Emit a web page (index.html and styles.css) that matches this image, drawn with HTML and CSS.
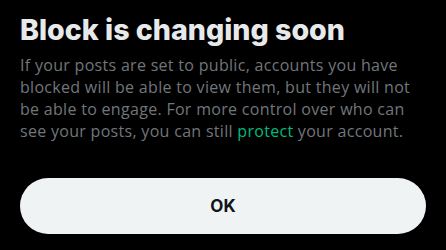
FILE: index.html
```html
<!DOCTYPE html>
<html>
<head>
<meta charset="utf-8">
<link rel="stylesheet" href="styles.css">
</head>
<body>
<div class="dialog">
  <h1 class="title">Block is changing soon</h1>
  <p class="body">If your posts are set to public, accounts you have blocked will be able to view them, but they will not be able to engage. For more control over who can see your posts, you can still <a class="link" href="#">protect</a> your account.</p>
  <button class="ok">OK</button>
</div>
</body>
</html>
```
FILE: styles.css
```css
html, body {
  margin: 0;
  padding: 0;
  background: #000;
}
.dialog {
  width: 446px;
  height: 250px;
  box-sizing: border-box;
  padding: 10px 20px 0 20px;
  display: flex;
  flex-direction: column;
  font-family: "Open Sans", "Noto Sans", sans-serif;
}
.title {
  margin: 0;
  font-family: "Inter", sans-serif;
  font-size: 28.6px;
  line-height: 40px;
  font-weight: 800;
  color: #e7e9ea;
}
.body {
  margin: 4px 0 0 0;
  font-size: 16px;
  line-height: 22px;
  letter-spacing: 0.3px;
  color: #71767b;
}
.link {
  color: #00ba7c;
  text-decoration: none;
}
.ok {
  margin-top: 36px;
  height: 56px;
  width: 100%;
  border: none;
  border-radius: 28px;
  background: #eff3f4;
  color: #0f1419;
  font-family: "Inter", sans-serif;
  font-size: 17px;
  font-weight: 700;
}
```
